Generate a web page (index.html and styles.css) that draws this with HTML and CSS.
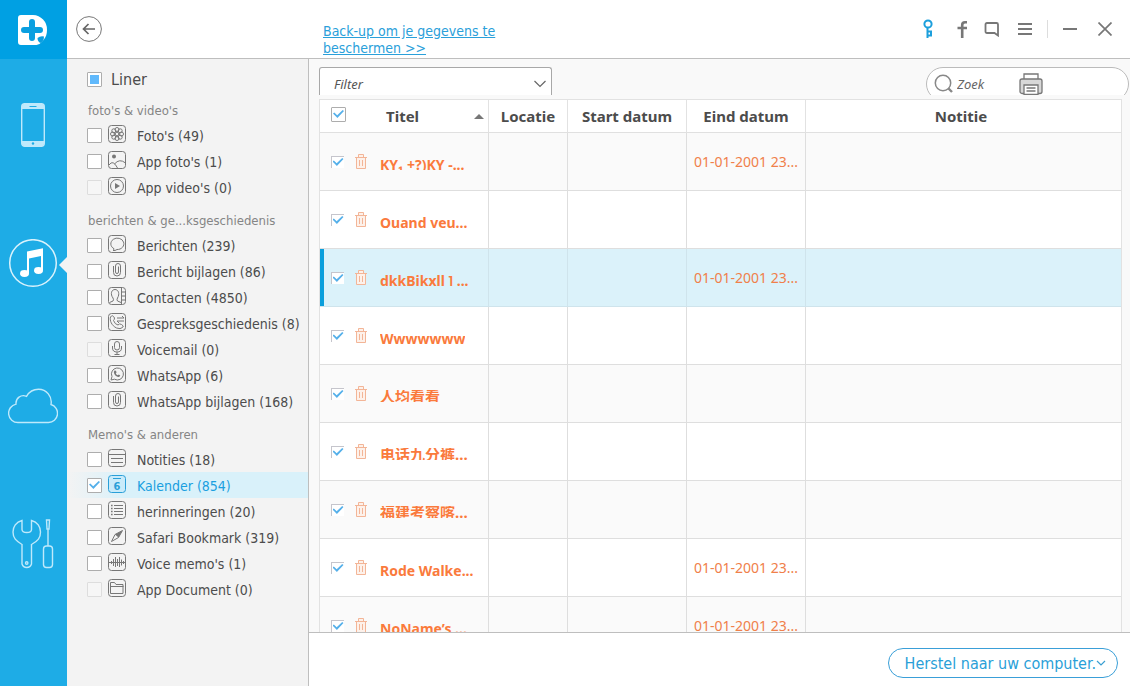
FILE: index.html
```html
<!DOCTYPE html>
<html lang="nl">
<head>
<meta charset="utf-8">
<title>Kalender</title>
<link rel="stylesheet" href="styles.css">
</head>
<body>
<svg class="defs" aria-hidden="true">
  <symbol id="trash" viewBox="0 0 12 15"><path d="M0 3.500h12M3.500 3.500v-3h5v3M1.500 3.500v11h9v-11M4.500 6v6M7.500 6v6"/></symbol>
  <symbol id="clip" viewBox="0 0 18 18"><rect x=".5" y=".5" width="17" height="17" rx="3"/><path d="M5.500 5v6.500a3.500 3.500 0 0 0 7 0V5a2.500 2.500 0 0 0-5 0v6a1.500 1.500 0 0 0 3 0V5.500"/></symbol>
</svg>
<div class="app">
  <div class="rail">
    <a class="logo" href="#" aria-label="Start">
      <svg width="30" height="30" viewBox="0 0 30 30"><path fill="#fff" d="M3 0h12a14.500 14.500 0 0 1 14 15c0 4-1 7-3.500 10l-4 4-3 1H3a3 3 0 0 1-3-3V3a3 3 0 0 1 3-3z"/><path d="M14 7v16M6 15h16" stroke="#0a9fe0" stroke-width="6" stroke-linecap="round"/><path fill="#0a9fe0" d="M19.500 23q3-2.500 6.500-1.500 0 4.500-3.500 6.500-3-1.500-3-5z"/></svg>
    </a>
    <nav class="rail-nav">
      <button class="rail-btn" aria-label="Apparaat"><svg width="24" height="52" viewBox="0 0 24 52"><rect x=".7" y="4.700" width="22.600" height="42.600" rx="3" fill="none" stroke="#bfe9fb" stroke-width="1.400"/><path fill="#bfe9fb" d="M1 10V7q0-2 2-2h18q2 0 2 2v3zM1 42v3q0 2 2 2h18q2 0 2-2v-3z"/><path d="M8.500 7.500h7" stroke="#1eace6"/><circle cx="12" cy="44.500" r="1.200" fill="#1eace6"/></svg></button>
      <button class="rail-btn current" aria-label="iTunes"><svg width="50" height="52" viewBox="0 0 50 52"><circle cx="25" cy="24" r="23.300" fill="none" stroke="#d9f2fc" stroke-width="1.500"/><path fill="#fff" d="M19 12.500l16-3.300v22h-2V17l-12 2.500v15h-2z"/><ellipse cx="16.500" cy="34.500" rx="4.500" ry="3.400" fill="#fff"/><ellipse cx="30.500" cy="31.500" rx="4.500" ry="3.400" fill="#fff"/></svg></button>
      <button class="rail-btn" aria-label="iCloud"><svg width="50" height="52" viewBox="0 0 50 52"><path fill="none" stroke="#bfe9fb" stroke-width="1.400" d="M10 43.500a9.300 9.300 0 0 1-2-18.400c-.5-6 5-10 10.500-7.800 3-5 7-7 12-7 8 0 14 7 12.500 15.200a9.200 9.200 0 0 1-2.500 18z"/></svg></button>
      <button class="rail-btn" aria-label="Gereedschap"><svg width="42" height="52" viewBox="0 0 42 52"><g fill="none" stroke="#bfe9fb" stroke-width="1.400"><path d="M10 1.500C4 3 1 8 1 13c0 6 3 9 9 12.500V45a5 5 0 0 0 9.500 0V25.500C26 22 28.500 19 28.500 13c0-5-3-10-9-11.500v9q0 3-4.700 3T10 10.500z"/><circle cx="14.700" cy="44" r="1.200"/><rect x="31.500" y="27" width="9" height="21.500" rx="3"/><path d="M36 27V10M34.500 1h3l-.5 9h-2z"/></g></svg></button>
    </nav>
  </div>

  <div class="window">
    <header class="topbar">
      <button class="back" aria-label="Terug"><svg width="26" height="26" viewBox="0 0 26 26"><circle cx="13" cy="13" r="12.400" fill="none" stroke="#777"/><path d="M19 13H8M12.500 8l-5 5 5 5" fill="none" stroke="#666" stroke-width="1.700"/></svg></button>
      <a class="backup" href="#">Back-up om je gegevens te beschermen &gt;&gt;</a>
      <div class="tools">
        <button aria-label="Registreren"><svg width="12" height="20" viewBox="0 0 12 20"><g fill="none" stroke="#1c9fdc" stroke-width="2"><circle cx="6" cy="5" r="3.600"/><path d="M5.500 9v10M5 12.500h5M5 16.500h5M9 12v5"/></g></svg></button>
        <button class="fb" aria-label="Facebook"><svg width="12" height="18" viewBox="0 0 12 18"><path d="M11 2.200H9Q6.200 2.200 6.200 5v13M1.500 8h9.500" fill="none" stroke="#777" stroke-width="2.600"/></svg></button>
        <button class="chat" aria-label="Feedback"><svg width="16" height="16" viewBox="0 0 16 16"><path d="M3 2h9.500q1.500 0 1.500 1.500v11L10.500 12H3q-1.500 0-1.500-1.500v-7Q1.500 2 3 2z" fill="none" stroke="#777" stroke-width="1.800"/></svg></button>
        <button class="menu" aria-label="Menu"><svg width="14" height="14" viewBox="0 0 14 14"><path d="M0 2h14M0 7h14M0 12h14" stroke="#777" stroke-width="2"/></svg></button>
        <span class="rule"></span>
        <button aria-label="Minimaliseren"><svg width="14" height="14" viewBox="0 0 14 14"><path d="M0 7h14" stroke="#777" stroke-width="2"/></svg></button>
        <button class="close" aria-label="Sluiten"><svg width="14" height="14" viewBox="0 0 14 14"><path d="M.5.5l13 13M13.500.5l-13 13" stroke="#777" stroke-width="1.700"/></svg></button>
      </div>
    </header>

    <div class="body">
      <aside class="sidebar">
        <label class="all"><input class="box partial" type="checkbox">Liner</label>

        <h2>foto's &amp; video's</h2>
        <label class="item"><input class="box" type="checkbox"><svg class="ico" viewBox="0 0 18 18"><rect x=".5" y=".5" width="17" height="17" rx="3"/><circle cx="9" cy="9" r="1.800"/><circle cx="9" cy="4.500" r="2"/><circle cx="9" cy="13.500" r="2"/><circle cx="4.500" cy="9" r="2"/><circle cx="13.500" cy="9" r="2"/><circle cx="5.800" cy="5.800" r="2"/><circle cx="12.200" cy="12.200" r="2"/><circle cx="12.200" cy="5.800" r="2"/><circle cx="5.800" cy="12.200" r="2"/></svg><span>Foto's (49)</span></label>
        <label class="item"><input class="box" type="checkbox"><svg class="ico" viewBox="0 0 18 18"><rect x=".5" y=".5" width="17" height="17" rx="3"/><circle cx="6" cy="5.500" r="2" class="solid"/><path d="M1 14q4-6 8.500 3M6.500 13q5-6 11-1"/></svg><span>App foto's (1)</span></label>
        <label class="item"><input class="box" type="checkbox" disabled><svg class="ico" viewBox="0 0 18 18"><rect x=".5" y=".5" width="17" height="17" rx="3"/><circle cx="9" cy="9" r="6.500"/><path class="solid" d="M7 6v6l5-3z"/></svg><span>App video's (0)</span></label>

        <h2>berichten &amp; ge...ksgeschiedenis</h2>
        <label class="item"><input class="box" type="checkbox"><svg class="ico" viewBox="0 0 18 18"><rect x=".5" y=".5" width="17" height="17" rx="3"/><path d="M6 13.700a6.500 5.700 0 1 1 3 .8Q7 16 5 15.500 6 15 6 13.700z"/></svg><span>Berichten (239)</span></label>
        <label class="item"><input class="box" type="checkbox"><svg class="ico"><use href="#clip"/></svg><span>Bericht bijlagen (86)</span></label>
        <label class="item"><input class="box" type="checkbox"><svg class="ico" viewBox="0 0 18 18"><rect x=".5" y=".5" width="17" height="17" rx="3"/><path d="M13.500 1v16M13.500 5h4M13.500 9h4M13.500 13h4M1.500 15.500l3.500-1.500q1-1 0-3C2 7 3.500 2.500 7 2.500S12 7 9.500 11q-1 2 0 3l3.500 1.500"/></svg><span>Contacten (4850)</span></label>
        <label class="item"><input class="box" type="checkbox"><svg class="ico" viewBox="0 0 18 18"><rect x=".5" y=".5" width="17" height="17" rx="3"/><path d="M2.500 4q2-3 4 1 0 1.500-1 2.500 1.500 4 4.500 4.500 1.500-2 3.500-.5 3 1.500 1 3-2 2-6 .5C3.500 12.500 1.500 7.500 2.500 4zM9 5h7l-2-2M16 8H9l2 2"/></svg><span>Gespreksgeschiedenis (8)</span></label>
        <label class="item"><input class="box" type="checkbox" disabled><svg class="ico" viewBox="0 0 18 18"><rect x=".5" y=".5" width="17" height="17" rx="3"/><rect x="6.500" y="2.500" width="5" height="8.500" rx="2.500"/><path d="M4.500 7v2q0 4 4.500 4t4.500-4V7M9 13v2.500M6.500 15.500h5"/></svg><span>Voicemail (0)</span></label>
        <label class="item"><input class="box" type="checkbox"><svg class="ico" viewBox="0 0 18 18"><rect x=".5" y=".5" width="17" height="17" rx="3"/><path d="M3 15l1-3.500a6 6 0 1 1 2.500 2.700z"/><path class="solid" d="M6.500 5.500l1.500.3.500 1.700-.7 1q.8 1.400 2 1.800l1-.7 1.500 1q-.5 1.700-2.200 1.400-3.800-1.200-4.300-5z"/></svg><span>WhatsApp (6)</span></label>
        <label class="item"><input class="box" type="checkbox"><svg class="ico"><use href="#clip"/></svg><span>WhatsApp bijlagen (168)</span></label>

        <h2>Memo's &amp; anderen</h2>
        <label class="item"><input class="box" type="checkbox"><svg class="ico" viewBox="0 0 18 18"><rect x=".5" y=".5" width="17" height="17" rx="3"/><path d="M1 5.500h16M3 9.500h12M3 13.500h12"/></svg><span>Notities (18)</span></label>
        <label class="item selected"><input class="box" type="checkbox" checked><svg class="ico" viewBox="0 0 18 18"><rect x=".5" y=".5" width="17" height="17" rx="3"/><path d="M5 3.500h8"/><text x="9" y="15" text-anchor="middle">6</text></svg><span>Kalender (854)</span></label>
        <label class="item"><input class="box" type="checkbox"><svg class="ico" viewBox="0 0 18 18"><rect x=".5" y=".5" width="17" height="17" rx="3"/><path d="M6 4.500h9M6 7.500h9M6 10.500h9M6 13.500h9"/><path stroke-width="1.600" d="M3 4.500h1.600M3 7.500h1.600M3 10.500h1.600M3 13.500h1.600"/></svg><span>herinneringen (20)</span></label>
        <label class="item"><input class="box" type="checkbox"><svg class="ico" viewBox="0 0 18 18"><rect x=".5" y=".5" width="17" height="17" rx="3"/><path d="M14.500 3.500L7 7.500 3.500 14.500l7-4z"/><path class="solid" d="M14.500 3.500L7 7.500l3.500 3z"/></svg><span>Safari Bookmark (319)</span></label>
        <label class="item"><input class="box" type="checkbox"><svg class="ico" viewBox="0 0 18 18"><rect x=".5" y=".5" width="17" height="17" rx="3"/><path d="M1 9.500h16M3.500 8v3M5.500 6v7M7.500 4v10M9.500 6v7M11.500 4v10M13.500 6.500v6M15.500 8v3"/></svg><span>Voice memo's (1)</span></label>
        <label class="item"><input class="box" type="checkbox" disabled><svg class="ico" viewBox="0 0 18 18"><rect x=".5" y=".5" width="17" height="17" rx="3"/><path d="M2.500 14.500v-11h4l1.500 2h7v9zM2.500 7.500h13"/></svg><span>App Document (0)</span></label>
      </aside>

      <main class="main">
        <div class="toolbar">
          <div class="filter">
            <select aria-label="Filter"><option>Filter</option></select>
            <svg width="14" height="8" viewBox="0 0 14 8"><path d="M1.500 1L7 6.500 12.500 1" fill="none" stroke="#666" stroke-width="1.200"/></svg>
          </div>
          <div class="search-clip">
            <div class="search">
              <svg width="20" height="20" viewBox="0 0 20 20"><circle cx="9" cy="9" r="7.700" fill="none" stroke="#888" stroke-width="1.500"/><path d="M14.500 14.500L18 18" stroke="#888" stroke-width="2.400"/></svg>
              <input type="text" placeholder="Zoek" aria-label="Zoek">
              <button aria-label="Afdrukken"><svg width="24" height="22" viewBox="0 0 24 22"><g stroke="#777" stroke-width="1.300" fill="#fff"><path d="M5 6V1h14v5"/><rect x="1" y="6" width="22" height="14.500" rx="2" fill="#d8d8d8"/><path d="M5 12h14v9.300H5z"/><path d="M7.500 15h9M7.500 18h9"/></g></svg></button>
            </div>
          </div>
        </div>
        <div class="grid">
          <table>
            <colgroup><col class="c1"><col class="c2"><col class="c3"><col class="c3"><col></colgroup>
            <thead><tr>
              <th><div class="title-head"><input class="box" type="checkbox" checked aria-label="Alles selecteren"><span>Titel</span><i class="sort"></i></div></th>
              <th>Locatie</th><th>Start datum</th><th>Eind datum</th><th class="note">Notitie</th>
            </tr></thead>
            <tbody>
              <tr><td><div class="entry"><input class="mini" type="checkbox" checked aria-label="Selecteer"><button aria-label="Verwijder"><svg><use href="#trash"/></svg></button><span>KY₁ +?)KY -...</span></div></td><td></td><td></td><td>01-01-2001 23...</td><td></td></tr>
              <tr><td><div class="entry"><input class="mini" type="checkbox" checked aria-label="Selecteer"><button aria-label="Verwijder"><svg><use href="#trash"/></svg></button><span>Quand veu...</span></div></td><td></td><td></td><td></td><td></td></tr>
              <tr class="active"><td><div class="entry"><input class="mini" type="checkbox" checked aria-label="Selecteer"><button aria-label="Verwijder"><svg><use href="#trash"/></svg></button><span>dkkBikxll ] ...</span></div></td><td></td><td></td><td>01-01-2001 23...</td><td></td></tr>
              <tr><td><div class="entry"><input class="mini" type="checkbox" checked aria-label="Selecteer"><button aria-label="Verwijder"><svg><use href="#trash"/></svg></button><span>Wwwwwww</span></div></td><td></td><td></td><td></td><td></td></tr>
              <tr><td><div class="entry"><input class="mini" type="checkbox" checked aria-label="Selecteer"><button aria-label="Verwijder"><svg><use href="#trash"/></svg></button><span lang="zh">人均看看</span></div></td><td></td><td></td><td></td><td></td></tr>
              <tr><td><div class="entry"><input class="mini" type="checkbox" checked aria-label="Selecteer"><button aria-label="Verwijder"><svg><use href="#trash"/></svg></button><span lang="zh">电话九分裤...</span></div></td><td></td><td></td><td></td><td></td></tr>
              <tr><td><div class="entry"><input class="mini" type="checkbox" checked aria-label="Selecteer"><button aria-label="Verwijder"><svg><use href="#trash"/></svg></button><span lang="zh">福建考察喀...</span></div></td><td></td><td></td><td></td><td></td></tr>
              <tr><td><div class="entry"><input class="mini" type="checkbox" checked aria-label="Selecteer"><button aria-label="Verwijder"><svg><use href="#trash"/></svg></button><span>Rode Walke...</span></div></td><td></td><td></td><td>01-01-2001 23...</td><td></td></tr>
              <tr><td><div class="entry"><input class="mini" type="checkbox" checked aria-label="Selecteer"><button aria-label="Verwijder"><svg><use href="#trash"/></svg></button><span>NoName’s ...</span></div></td><td></td><td></td><td>01-01-2001 23...</td><td></td></tr>
            </tbody>
          </table>
        </div>
        <footer class="footer">
          <button class="restore">Herstel naar uw computer.<svg width="10" height="7" viewBox="0 0 10 7"><path d="M1 1l4 4 4-4" fill="none" stroke="#3a9fd2" stroke-width="1.200"/></svg></button>
        </footer>
      </main>
    </div>
  </div>
</div>
</body>
</html>
```
FILE: styles.css
```css
* { box-sizing: border-box; }
body {
  margin: 0;
  font-family: "Noto Sans", "Noto Sans CJK SC", sans-serif;
  font-size: 14px;
  color: #4c4c4c;
}
button { border: 0; padding: 0; background: none; font: inherit; cursor: pointer; }
svg { display: block; flex: none; }
.defs { position: absolute; width: 0; height: 0; }

.app { display: flex; height: 100vh; background: #fff; overflow: hidden; }

.rail { flex: none; width: 67px; background: #1eace6; }
.logo { display: flex; align-items: center; justify-content: center; height: 59px; padding-right: 2px; background: #00a0e3; }
.rail-nav { display: flex; flex-direction: column; gap: 88px; padding-top: 40px; }
.rail-btn { position: relative; display: flex; justify-content: center; width: 66px; }
.current::after {
  content: "";
  position: absolute;
  right: -1px;
  top: 18px;
  border: 8px solid transparent;
  border-left: 0;
  border-right-color: #f3f3f3;
}

.window { flex: 1; min-width: 0; display: flex; flex-direction: column; }
.topbar { display: flex; flex: none; height: 59px; border-bottom: 1px solid #bebebe; }
.back { width: 44px; display: flex; justify-content: center; align-items: center; }
.backup {
  width: 190px;
  margin-left: 212px;
  padding-top: 23px;
  font-family: "DejaVu Sans Condensed", "Noto Sans", sans-serif;
  line-height: 17px;
  color: #2aa0da;
}
.tools { display: flex; align-items: center; gap: 15px; margin-left: auto; padding-right: 18px; }
.rule { width: 1px; height: 18px; background: #ddd; }
.close { margin-left: 6px; }
.fb { margin-left: 7px; }
.chat { margin-left: 1px; }
.menu { margin-left: 3px; }

.body { flex: 1; min-height: 0; display: flex; }
.sidebar {
  flex: none;
  width: 242px;
  background: #f3f3f3;
  border-right: 1px solid #bebebe;
  overflow: hidden;
  font-family: "DejaVu Sans Condensed", "Noto Sans", sans-serif;
}
.all { display: flex; align-items: center; gap: 9px; height: 31px; padding: 10px 0 0 20px; font-size: 16px; }
.sidebar h2 { margin: 0; height: 32px; padding: 12px 0 0 21px; font-size: 13px; font-weight: 400; line-height: 18px; color: #858585; }
.item { display: flex; align-items: center; height: 26px; padding-left: 20px; }
.item span { padding-top: 2px; line-height: 20px; white-space: nowrap; }
.selected { color: #1a9fe0; background: linear-gradient(to right, #f3f3f3, #d9f1fa 60px); }

.box {
  appearance: none;
  display: grid;
  place-items: center;
  flex: none;
  width: 15px;
  height: 15px;
  margin: 0;
  border: 1px solid #adadad;
  border-radius: 1px;
  background: #fff;
}
.box:disabled { border-color: #ddd; background: #f6f6f6; }
.box:checked::before, .mini:checked::before {
  content: "";
  width: 11px;
  height: 9px;
  background: #55b0ea;
  clip-path: polygon(0 45%, 12% 32%, 38% 65%, 88% 5%, 100% 18%, 40% 95%);
}
.partial::before { content: ""; width: 9px; height: 9px; background: #60b9fc; }
.ico { width: 18px; height: 18px; margin: 0 11px 2px 6px; fill: none; stroke: #777; }
.ico .solid { fill: #777; stroke: none; }
.selected .ico { stroke: #2a9fd8; fill: #c9ebfa; }
.selected text { font-size: 11px; font-weight: 600; stroke: none; fill: #2a9fd8; }

.main { flex: 1; min-width: 0; display: flex; flex-direction: column; background: #f9f9f9; }
.toolbar { display: flex; flex: none; justify-content: space-between; height: 40px; padding: 8px 1px 4px 10px; }
.filter { position: relative; width: 233px; }
.filter select {
  appearance: none;
  width: 100%;
  height: 28px;
  padding: 5px 14px 0;
  border: 1px solid #a8a8a8;
  border-bottom: 0;
  border-radius: 3px 3px 0 0;
  background: #fff;
  color: #555;
  font: italic 13px "Noto Sans", sans-serif;
}
.filter svg { position: absolute; right: 5px; top: 13px; pointer-events: none; }
.search-clip { width: 203px; height: 28px; overflow: hidden; }
.search { display: flex; align-items: center; height: 34px; padding-left: 7px; border: 1px solid #bbb; border-radius: 17px; background: #fff; }
.search input { width: 65px; padding: 0 0 0 3px; border: 0; outline: 0; background: none; font: italic 13px "Noto Sans", sans-serif; }
.search input::placeholder { color: #666; }

.grid { flex: 1; min-height: 0; margin: 0 8px 0 10px; border: 1px solid #e2e2e2; border-bottom: 0; overflow: hidden; }
table { width: 100%; table-layout: fixed; border-collapse: separate; border-spacing: 0; }
.c1 { width: 169px; }
.c2 { width: 79px; }
.c3 { width: 119px; }
th { height: 33px; padding: 0; background: #fff; border-bottom: 1px solid #e0e0e0; border-right: 1px solid #e2e2e2; font-size: 15px; font-weight: 700; white-space: nowrap; }
td { height: 58px; padding: 0 0 0 7px; background: #fff; border-bottom: 1px solid #dedede; border-right: 1px solid #dedede; color: #f0804a; white-space: nowrap; overflow: hidden; }
th:last-child, td:last-child { border-right: 0; }
th.note { padding-right: 5px; }
tbody tr:nth-child(odd) td { background: #fafafa; }
tbody tr.active td { background: #dbf2fa; border-color: #cfe4ec; }
tbody tr.active td:first-child { box-shadow: inset 4px 0 #0a9fdc; }
.title-head { display: flex; align-items: center; padding: 0 4px 0 11px; }
.title-head .box { margin-bottom: 4px; }
.title-head span { margin-left: 40px; }
.sort { margin-left: auto; border: 5px solid transparent; border-top: 0; border-bottom-color: #777; }
.entry { display: flex; align-items: center; padding-left: 4px; }
.mini {
  appearance: none;
  display: grid;
  place-items: center;
  flex: none;
  width: 13px;
  height: 12px;
  margin: 0;
  border: solid #c5c5cc;
  border-width: 1px 0 0 1px;
  background: #fff;
}
.entry button { margin: 0 13px 0 11px; }
.entry svg { width: 12px; height: 15px; fill: #fdf1ea; stroke: #f3b597; }
.entry span { height: 12px; margin-top: 5px; line-height: 13px; overflow: hidden; color: #fa7a3c; font-weight: 700; }
.entry [lang="zh"] { font-size: 15px; }

.footer { display: flex; flex: none; align-items: flex-start; justify-content: flex-end; height: 54px; padding: 15px 12px 0 0; border-top: 1px solid #bebebe; background: #fff; }
.restore {
  display: flex;
  align-items: center;
  height: 30px;
  padding: 0 11px 0 16px;
  border: 1px solid #3a9fd8;
  border-radius: 15px;
  background: #fff;
  color: #2a9fd8;
  font-family: "DejaVu Sans Condensed", "Noto Sans", sans-serif;
  font-size: 16px;
}
```
